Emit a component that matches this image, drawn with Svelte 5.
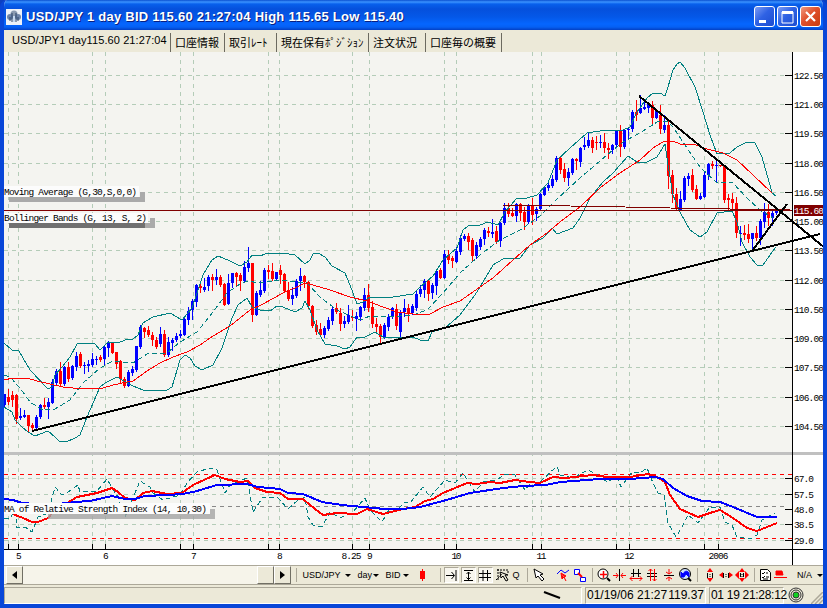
<script lang="ts">
  // one row per day: colour, high, body top, body bottom, low (chart pixels)
  const rows = `b 394 394 405 406|r 389 397 402 404|r 391 395 400 406|r 394 395 419 423|b 408 416 418 419|b 410 415 417 417|r 415 415 426 432|r 423 425 428 430|b 415 417 428 428|b 404 405 417 418|r 398 405 407 408|b 398 402 407 418|b 379 382 403 403|b 369 371 383 384|r 362 371 384 385|b 366 367 384 385|r 362 367 379 381|b 365 366 378 379|b 352 356 367 370|r 352 354 366 367
b 362 365 366 373|b 360 364 366 371|b 353 359 365 366|b 356 359 360 364|r 355 357 360 361|b 346 347 359 364|b 341 343 348 356|r 343 343 353 353|r 352 352 364 368|r 360 361 379 383|r 377 379 386 387|b 370 372 386 386|b 366 369 373 375|b 346 346 370 371|b 325 327 347 348|r 327 328 332 337|r 326 330 335 336|r 332 335 340 345|r 337 340 347 348|b 327 334 344 346
r 330 334 355 356|b 337 342 355 356|b 338 340 343 350|b 333 336 340 341|b 330 334 336 337|b 317 319 335 335|b 307 311 320 324|b 299 301 310 319|b 284 285 302 306|r 284 286 288 292|b 278 287 290 291|b 275 277 286 290|r 274 277 280 290|b 269 277 280 284|r 275 277 285 286|r 283 284 305 305|b 274 283 304 304|b 273 273 283 287|r 272 273 277 286|r 273 275 281 290
b 261 267 281 282|b 247 263 268 271|r 263 263 315 321|b 291 293 315 315|b 281 290 295 296|b 268 270 291 292|r 265 270 272 278|r 263 271 279 280|b 272 272 279 279|r 265 270 275 283|r 273 274 291 292|r 282 290 299 300|b 287 295 299 304|b 279 281 296 297|b 268 276 281 290|r 275 276 282 287|r 281 282 306 308|r 305 306 326 327|r 320 325 332 334|r 323 329 335 336
b 326 328 335 337|b 317 320 329 330|b 307 309 321 324|r 303 308 312 313|r 308 313 324 330|b 316 321 324 327|b 305 315 322 323|r 310 317 318 320|b 312 316 319 330|b 306 307 317 320|b 288 295 308 310|r 284 295 308 311|r 301 307 324 327|r 318 324 327 333|r 324 326 337 344|b 323 325 337 338|b 314 317 327 330|b 307 308 317 318|r 304 309 326 329|b 310 312 332 337
b 299 308 312 316|r 304 308 313 321|b 304 306 313 314|b 291 294 308 310|b 285 289 294 296|b 279 281 290 297|r 280 281 294 300|b 283 285 293 298|b 270 271 286 294|r 268 270 278 278|b 250 254 278 278|r 250 255 260 263|r 256 258 261 267|b 247 251 262 262|b 235 238 252 254|b 234 236 239 240|r 233 236 242 249|r 238 240 256 260|b 242 245 256 258|b 237 239 247 249
b 228 230 239 244|r 227 231 233 236|b 219 232 234 237|r 226 231 242 243|b 222 223 241 246|b 203 208 223 224|r 203 208 214 216|r 208 213 216 216|b 203 204 216 221|r 203 204 213 220|r 207 212 222 229|b 204 206 222 223|r 198 205 215 224|b 207 209 214 220|b 193 194 209 210|b 186 187 195 195|b 183 185 188 190|b 175 179 186 187|b 156 158 180 181|r 156 158 170 173
r 163 169 178 181|b 168 172 178 185|b 158 159 173 174|r 158 159 161 169|b 147 148 162 166|b 137 145 147 149|b 133 140 146 147|r 137 140 148 152|r 136 142 143 149|b 135 142 143 147|r 133 142 148 152|r 143 148 150 158|b 144 145 150 153|b 130 131 145 146|r 125 131 147 156|b 129 130 147 148|b 127 129 130 139|b 110 112 129 131|r 100 112 115 120|b 95 108 113 113
b 102 107 109 109|b 103 104 108 112|r 101 105 118 123|b 109 111 118 118|r 105 115 129 133|b 115 125 130 132|r 120 125 176 188|r 170 175 194 202|r 188 194 208 210|b 191 199 210 210|b 176 178 200 201|b 173 176 179 185|r 169 175 190 191|r 185 189 199 199|b 193 196 199 199|b 172 175 197 197|b 163 164 175 179|r 161 164 166 168|b 159 165 166 182|r 165 165 166 166
r 165 166 200 202|r 194 198 200 210|r 193 199 203 208|r 197 203 233 237|b 226 233 234 245|r 225 233 235 239|r 224 234 239 242|b 233 233 239 250|r 226 233 238 240|b 219 221 238 244|b 203 212 222 227|r 204 212 218 225|b 211 213 218 225|b 210 211 213 214`;

  const candles = rows.split(/[|\n]/).map((row, i) => {
    const [color, ...values] = row.trim().split(' ');
    const [high, top, bottom, low] = values.map(Number);
    return { x: 4 + i * 4, up: color === 'b', high, top, bottom, low };
  });

  const movingAverage =
    '4,380 13,378 27,378 37,381 50,384 63,387 83,389 103,388 113,385 127,382 133,381 147,371 160,363 173,357 187,352 200,345 213,336 230,326 250,310 263,304 283,293 297,287 305,283 313,285 330,290 350,297 367,301 383,307 397,312 413,314 430,314 443,307 460,301 480,287 493,278 513,260 530,245 547,233 560,222 580,207 600,188 620,173 640,160 653,148 663,142 673,141 680,144 693,144 707,149 723,153 737,160 753,175 772,193';
  const upperBand =
    '4,343 12,350 19,351 30,370 48,389 52,387 55,375 62,367 70,357 77,344 83,343 95,344 100,350 108,342 118,343 125,340 133,339 138,335 143,323 153,317 170,313 182,320 192,308 203,275 212,260 218,256 230,261 240,266 247,262 252,255 260,256 265,254 283,253 295,255 305,264 310,260 313,254 318,253 325,257 332,266 345,273 352,290 357,304 363,302 370,297 380,298 393,297 413,294 420,287 433,276 443,260 457,248 463,230 468,226 480,225 488,222 498,225 505,212 517,198 527,198 537,195 548,183 557,160 570,148 587,133 600,131 623,130 630,127 637,112 647,98 653,93 660,93 665,96 668,87 673,70 677,64 680,62 685,68 695,87 703,112 710,135 717,154 730,153 737,147 747,142 755,143 762,157 770,185 772,193 776,196';
  const lowerBand =
    '4,407 12,412 15,420 22,427 28,432 35,436 48,431 55,437 59,441 66,442 75,438 80,435 87,417 100,387 105,383 117,377 122,380 133,386 143,390 167,390 172,387 180,360 185,355 190,358 195,366 202,370 213,365 222,348 232,318 238,305 247,298 252,307 260,310 270,311 277,306 283,307 295,312 302,308 305,301 310,310 317,330 325,344 337,346 345,349 350,347 357,337 365,337 375,332 383,337 413,337 420,340 428,341 432,332 445,328 460,315 475,295 483,282 493,265 503,259 520,258 530,245 543,238 552,228 557,234 573,228 580,218 590,198 603,182 613,173 628,156 637,162 647,162 657,157 665,144 668,165 673,195 680,212 690,230 700,237 707,232 717,213 732,211 737,222 742,242 750,257 757,265 763,265 770,255 776,247';
  const middleBand =
    '4,375 10,377 20,388 30,402 43,410 55,409 70,400 83,383 100,368 113,361 123,362 133,363 147,354 160,353 167,353 180,342 197,332 213,312 227,293 240,284 247,281 260,283 280,280 307,283 320,297 337,310 360,320 370,316 387,317 413,315 427,310 443,293 460,273 480,255 500,240 520,230 540,216 557,199 580,178 607,155 623,142 640,133 657,122 667,121 673,127 687,148 700,167 717,183 732,182 747,198 760,210 773,218';

  const rsi =
    '4,518 10,518 15,510 17,528 25,527 32,532 38,517 48,513 55,487 62,495 68,492 78,485 80,492 97,491 107,479 115,493 118,497 125,517 132,500 140,481 150,487 153,493 163,500 180,495 187,483 197,472 210,468 217,470 225,493 230,485 247,478 253,512 263,497 277,497 288,509 298,500 305,497 308,517 313,525 322,527 330,512 340,518 353,512 365,498 370,510 382,522 390,508 397,510 405,502 410,503 423,487 430,497 445,480 455,483 463,473 475,492 483,482 497,480 505,474 515,475 525,490 532,482 540,482 557,466 560,475 573,478 588,470 598,475 607,482 617,477 621,487 632,472 640,473 647,468 653,483 658,493 664,495 668,523 676,537 682,527 688,515 698,523 710,507 720,507 725,522 732,525 737,537 750,539 757,535 762,520 775,513';
  const rsiFast =
    '4,505 15,515 23,518 32,522 38,522 48,518 55,510 67,503 77,497 97,493 112,488 118,492 125,498 135,500 143,493 152,491 167,494 182,493 193,485 215,475 225,479 240,482 248,481 255,488 267,492 280,493 288,499 303,499 310,505 323,515 337,513 357,514 367,509 383,514 403,509 415,507 425,501 433,499 443,493 455,488 467,483 477,484 490,482 500,483 515,480 530,482 540,483 553,477 565,478 593,475 607,477 630,477 648,474 657,477 665,482 670,495 680,509 698,517 710,513 720,510 733,518 747,528 757,531 767,527 777,523';
  const rsiSlow =
    '4,499 13,500 22,503 50,505 75,502 90,501 112,496 125,499 135,499 145,496 167,495 183,494 197,491 217,485 247,484 258,487 280,489 288,493 303,494 322,502 342,505 363,507 385,509 403,509 420,507 443,501 470,493 503,488 523,486 546,485 560,482 600,479 630,479 655,477 663,479 673,488 687,496 702,501 720,502 733,507 757,517 777,517';

  const columns = [8, 18, 92, 105, 180, 193, 268, 279, 352, 369, 444, 456, 532, 541, 616, 629, 704, 718];
  const prices = [
    [75, '122.50'], [104, '121.00'], [133, '119.50'], [163, '118.00'], [192, '116.50'], [221, '115.00'], [250, '113.50'],
    [280, '112.00'], [309, '110.50'], [338, '109.00'], [367, '107.50'], [397, '106.00'], [426, '104.50'],
  ] as [number, string][];
  const levels = [[478, '67.0'], [494, '57.5'], [509, '48.0'], [524, '38.5'], [540, '29.0']] as [number, string][];
  const months = [
    [18, '5'], [105, '6'], [193, '7'], [279, '8'], [351, '8.25'], [369, '9'], [456, '10'], [541, '11'], [629, '12'], [718, '2006'],
  ] as [number, string][];

  const tabs = [
    { label: '口座情報', width: 54 },
    { label: '取引ﾚｰﾄ', width: 52 },
    { label: '現在保有ﾎﾟｼﾞｼｮﾝ', width: 92 },
    { label: '注文状況', width: 57 },
    { label: '口座毎の概要', width: 76 },
  ];
</script>

<div class="window">
  <header class="titlebar">
    <svg class="app-icon" width="16" height="16" viewBox="0 0 16 16">
      <rect width="16" height="16" fill="#eef2f8" />
      <circle cx="8" cy="5" r="3.5" fill="#8a9ab0" />
      <circle cx="4" cy="8" r="3" fill="#6d84a8" />
      <circle cx="12" cy="8" r="3" fill="#6d84a8" />
      <path d="M6 4v9M10 4v9M4 8v4M12 8v4" stroke="#2c4468" />
      <path d="M7 7h2v6H7z" fill="#c4d8f0" />
    </svg>
    <h1>USD/JPY 1 day BID 115.60 21:27:04 High 115.65 Low 115.40</h1>
    <div class="controls">
      <button aria-label="Minimize"><svg width="19" height="19"><path d="M4 13h7v3H4z" fill="#fff" /></svg></button>
      <button aria-label="Maximize"><svg width="19" height="19"><path d="M4 5h11v11H4z" fill="none" stroke="#fff" /><path d="M4 4h11v3H4z" fill="#fff" /></svg></button>
      <button class="close" aria-label="Close"><svg width="19" height="19"><path d="M5 5l9 9M14 5l-9 9" stroke="#fff" stroke-width="2.2" /></svg></button>
    </div>
  </header>

  <nav class="tabs">
    <span class="tab current">USD/JPY1 day115.60 21:27:04</span>
    {#each tabs as tab}
      <span class="tab" style:width="{tab.width}px">{tab.label}</span>
    {/each}
  </nav>

  <svg class="chart" width="819" height="513" viewBox="4 52 819 513">
    <rect x="4" y="52" width="819" height="513" fill="#fff" />
    <rect x="4" y="52" width="788" height="497" fill="#f4f4f0" />

    <g class="grid">
      {#each columns as x}
        <line x1={x + 0.5} x2={x + 0.5} y1="52" y2="549" />
      {/each}
      {#each prices as [y]}
        <line x1="4" x2="792" y1={y + 0.5} y2={y + 0.5} />
      {/each}
      {#each levels.filter(([y]) => y !== 509) as [y]}
        <line x1="4" x2="792" y1={y + 0.5} y2={y + 0.5} />
      {/each}
      <line class="mid" x1="4" x2="785" y1="506.5" y2="506.5" />
      <line class="limit" x1="4" x2="792" y1="474.5" y2="474.5" />
      <line class="limit" x1="4" x2="792" y1="538.5" y2="538.5" />
    </g>
    <rect x="4" y="452" width="819" height="3" fill="#c0c0c0" />

    <g class="candles">
      {#each candles as c}
        <g fill={c.up ? '#0000ff' : '#ff0000'}>
          <rect x={c.x} y={c.high} width="1" height={c.low - c.high + 1} />
          <rect x={c.x - 1} y={c.top} width="3" height={Math.max(1, c.bottom - c.top)} />
        </g>
      {/each}
    </g>

    <g class="lines">
      <polyline points={upperBand} stroke="#008080" />
      <polyline points={lowerBand} stroke="#008080" />
      <polyline points={middleBand} stroke="#008080" stroke-dasharray="5 3" />
      <polyline points={movingAverage} stroke="#ff0000" />
      <path d="M4 210.5H792" stroke="#800000" />
      <path d="M503 205.5H537L603 206.5H603L670 208L790 210" stroke="#800000" />
      <path d="M32 431L820 234M639 96L825 248M752 251L787 204" stroke="#000" stroke-width="2" />
      <polyline points={rsi} stroke="#008080" stroke-dasharray="5 3" />
      <polyline points={rsiFast} stroke="#ff0000" stroke-width="2" />
      <polyline points={rsiSlow} stroke="#0000ff" stroke-width="2" />
    </g>

    <!-- indicator captions -->
    <g class="text">
      <rect x="4" y="186" width="135" height="11" fill="#fcfcfc" />
      <path d="M9 197h131v-5h5v10H9z" fill="#aaa" />
      <text x="4" y="195" textLength="133">Moving Average (G,30,S,0,0)</text>
      <rect x="4" y="213" width="144" height="10" fill="#fcfcfc" />
      <path d="M9 223h136v5H9z" fill="#707070" />
      <path d="M150 218h5v10h-10v-5h5z" fill="#aaa" />
      <text x="4" y="221" textLength="143">Bollinger Bands (G, 13, S, 2)</text>
      <rect x="4" y="503" width="206" height="11" fill="#fcfcfc" />
      <path d="M48 514h162v-5h5v10H48z" fill="#a4a4a4" fill-opacity="0.8" />
      <text x="4" y="512" textLength="203">MA of Relative Strength Index (14, 10,30)</text>
    </g>

    <g class="axis">
      <path d="M792.5 52V565M4 549.5H823" />
      {#each columns as x}
        <path d="M{x + 0.5} 544V549" />
      {/each}
      {#each [...prices, ...levels] as [y]}
        <path d="M785 {y + 0.5}H792" />
      {/each}
    </g>

    <g class="text">
      {#each [...prices, ...levels] as [y, label]}
        <text x="794" y={y + 4} textLength={label.length * 5}>{label}</text>
      {/each}
      {#each months as [x, label]}
        <text x={x - label.length * 2.5 + 0.5} y="559" textLength={label.length * 5}>{label}</text>
      {/each}
      <rect x="794" y="205" width="29" height="11" fill="#800000" />
      <text x="794" y="214" textLength="30" fill="#fff">115.60</text>
    </g>
  </svg>

  <div class="toolbar">
    <div class="scrollbar">
      <span class="key"><svg width="5" height="8"><path d="M5 0v8L0 4z" /></svg></span>
      <span class="track"></span>
      <span class="key"></span>
      <span class="key"><svg width="5" height="8"><path d="M0 0v8l5-4z" /></svg></span>
    </div>
    <i class="sep"></i>
    <span class="pick pair">USD/JPY</span>
    <span class="pick day">day</span>
    <span class="pick bid">BID</span>
    <svg class="pick kind" width="9" height="14"><path d="M2 3h5v8H2zM4 1h1v12H4z" fill="#f00" /></svg>
    <i class="sep"></i>
    <div class="group modes">
      <span class="pressed"><svg width="12" height="14" viewBox="0 0 12 14"><path d="M1 7.5h8M6.500 4l3 3.500-3 3.500M11 2v11" /></svg></span>
      <span class="pressed"><svg width="12" height="14" viewBox="0 0 12 14"><path d="M2 2.500h9M2 12.500h9M6.500 4v8M4.500 6l2-2 2 2M4.500 9.500l2 2 2-2" /></svg></span>
      <span class="pressed"><svg width="12" height="14" viewBox="0 0 12 14"><path d="M4 2v11M8.500 2v11M0 5.500h12M0 9.500h12" /></svg></span>
      <span><svg width="13" height="14" viewBox="0 0 13 14"><path d="M1 2h11M2 1v12M0 12l6-6M12 3v3" stroke-dasharray="2 1" /><path d="M4 4l1 6 2-2 3 5 2-1-3-5h3z" /></svg></span>
      <span class="q">Q</span>
    </div>
    <i class="sep"></i>
    <div class="group draw">
      <svg class="pick cursor" width="12" height="14" viewBox="0 0 12 14"><path d="M1 1l2 9 2-2 4 5 2-2-4-4 3-1z" fill="#fff" /></svg>
      <svg width="14" height="14" viewBox="0 0 14 14"><path d="M1 6l4-4 4 3 4-3" stroke="#00f" /><path d="M5 5l1 6 2-2 2 4M5 5l5 3-2 1" stroke="#f00" fill="#f00" /></svg>
      <svg width="14" height="14" viewBox="0 0 14 14"><path d="M1.500 1.500h5v5h-5zM7.500 9.500h5v4h-5z" stroke="#00f" fill="#fff" /><path d="M5 5l4 4" stroke="#f00" stroke-width="2" /></svg>
    </div>
    <i class="sep"></i>
    <div class="group zoom">
      <svg width="14" height="14" viewBox="0 0 14 14"><circle cx="6" cy="6" r="5" fill="#fff" /><path d="M10 10l3 3" stroke-width="2" /><path d="M3 6.500h7M6.500 3v7" stroke="#f00" stroke-width="1.500" /></svg>
      <svg width="14" height="14" viewBox="0 0 14 14"><path d="M6.500 1v12" /><path d="M0 7.500h5M8 7.500h5M3 5l2 2.500L3 10M10 5L8 7.500l2 2.500" stroke="#f00" /></svg>
      <svg width="14" height="14" viewBox="0 0 14 14"><path d="M2 5.500h10M4.500 1v8M9.500 1v8" /><path d="M1 10.500h12M3.500 8L1 10.500 3.500 13M10.500 8l2.500 2.500-2.500 2.500" stroke="#f00" /></svg>
      <svg width="14" height="14" viewBox="0 0 14 14"><path d="M2 5.500h10M2 8.500h10" /><path d="M5.500 1v12M9.500 1v12M3.500 3l2-2 2 2M7.500 11l2 2 2-2" stroke="#f00" /></svg>
      <svg width="14" height="14" viewBox="0 0 14 14"><path d="M2 7.500h10" /><path d="M7 1v5M7 9v4M4 4l3 2 3-2M4 11l3-2 3 2" stroke="#f00" /></svg>
      <svg width="14" height="14" viewBox="0 0 14 14"><circle cx="7" cy="6" r="5.500" fill="#cfe2ff" /><path d="M10 10l3 3" stroke-width="2" /><path d="M3 9V4l2 2c2-4 5-3 6-1v4L8 6 6 9z" fill="#00f" stroke="#00f" /></svg>
    </div>
    <i class="sep"></i>
    <div class="group ratio">
      <svg width="14" height="14" viewBox="0 0 14 14"><path d="M7 0l3 4H4zM7 14l3-4H4z" fill="#f00" stroke="none" /><path d="M4.500 5v5M9.500 5v5M7 6v1M7 8v1" /></svg>
      <svg width="14" height="14" viewBox="0 0 14 14"><path d="M0 7l4-3v6zM14 7l-4-3v6z" fill="#f00" stroke="none" /><path d="M4.500 5v5M9.500 5v5M7 6v1M7 8v1" /></svg>
      <svg width="14" height="14" viewBox="0 0 14 14"><path d="M7 0l3 4H4zM7 14l3-4H4zM0 7l4-4v8zM14 7l-4-4v8z" fill="#f00" stroke="none" /><path d="M5.500 5v4M8.500 5v4M7 6v1M7 8v1" /></svg>
    </div>
    <i class="sep"></i>
    <div class="group list">
      <svg width="11" height="14" viewBox="0 0 11 14"><path d="M.5 1.500h7l3 3v8H.5z" fill="#fff" /><path d="M2 5l1 1 2-2M6 5h2M2 9l1 1 2-2M6 9h3M3 11h5" /></svg>
      <svg class="pick" width="13" height="14" viewBox="0 0 13 14"><path d="M2 3h6l1 4H2zM0 9.500h13" fill="#f00" stroke="#f00" /></svg>
      <span class="pick na">N/A</span>
    </div>
  </div>

  <footer class="status">
    <span class="cell message"><svg width="18" height="10"><path d="M1 2l16 6" stroke="#000" stroke-width="2" /></svg></span>
    <span class="cell quote"><b>01/19/06 21:27</b><b>119.37</b></span>
    <span class="cell clock"><b>01 19 21:28:12</b></span>
    <svg class="lamp" width="16" height="16" viewBox="0 0 16 16">
      <circle cx="8" cy="8" r="7" /><circle cx="8" cy="8" r="5" /><circle cx="8" cy="8" r="3" fill="#10d020" />
    </svg>
    <svg class="grip" width="12" height="12"><path d="M0 12L12 0M4 12l8-8M8 12l4-4" stroke="#aca899" stroke-width="1.500" /></svg>
  </footer>
</div>

<style>
  :global(body) {
    background: #0c3fc0;
  }

  .window {
    width: 827px;
    height: 608px;
    box-sizing: border-box;
    display: flex;
    flex-direction: column;
    border: 4px solid #0846d8;
    border-top: 0;
    border-radius: 7px 7px 0 0;
    background: #ece9d8;
    font-family: 'Liberation Sans', 'Noto Sans CJK JP', sans-serif;
    color: #000;
    overflow: hidden;
  }

  .titlebar {
    height: 30px;
    flex: none;
    margin: 0 -4px;
    padding: 3px 6px 0;
    box-sizing: border-box;
    display: flex;
    align-items: center;
    background: linear-gradient(#0a50d0 0, #3b93ff 2px, #0860ec 4px, #0550dc 9px, #0458e8 17px, #0566ff 24px, #0560f4 27px, #0340c4 30px);
  }

  h1 {
    margin: 0 0 0 4px;
    flex: 1;
    font-size: 13px;
    line-height: 16px;
    letter-spacing: 0.25px;
    white-space: nowrap;
    color: #fff;
    text-shadow: 1px 1px #0a1f80;
  }

  .controls {
    display: flex;
    gap: 2px;
  }

  .controls button {
    width: 21px;
    height: 21px;
    padding: 0;
    border: 1px solid #fff;
    border-radius: 3px;
    background: linear-gradient(135deg, #7c9cf4, #2f62e4 45%, #1c4cd0);
  }

  .controls .close {
    background: linear-gradient(135deg, #f09a80, #e0502c 45%, #c83c10);
  }

  .controls svg {
    display: block;
  }

  .tabs {
    height: 22px;
    flex: none;
    display: flex;
    align-items: flex-end;
    font-size: 11px;
    line-height: 18px;
    white-space: nowrap;
  }

  .tab {
    height: 19px;
    box-sizing: border-box;
    flex: none;
    padding-left: 4px;
    border-right: 1px solid #6c6a60;
    font-family: 'Noto Sans CJK JP', sans-serif;
    font-size: 11px;
  }

  .current {
    width: 167px;
    padding-left: 8px;
    line-height: 14px;
    letter-spacing: 0.1px;
    font-family: 'Liberation Sans', sans-serif;
  }

  .chart {
    display: block;
    flex: none;
    shape-rendering: crispEdges;
  }

  .grid line {
    stroke: #b4ccb8;
    stroke-dasharray: 4 4;
  }

  .grid .mid {
    stroke: #888;
  }

  .grid .limit {
    stroke: #f00;
  }

  .lines {
    fill: none;
  }

  .axis {
    stroke: #000;
    fill: none;
  }

  .text {
    font-family: 'Liberation Mono', monospace;
    font-size: 9.500px;
  }

  .toolbar {
    height: 20px;
    flex: none;
    display: flex;
    align-items: center;
    box-sizing: border-box;
    border-top: 1px solid #aca899;
    border-bottom: 1px solid #aca899;
    font-size: 9px;
  }

  .toolbar svg {
    flex: none;
    fill: none;
    stroke: #000;
  }

  .scrollbar {
    width: 293px;
    height: 18px;
    display: flex;
    padding-left: 2px;
    box-sizing: border-box;
    background: #f6f4ea;
  }

  .key {
    width: 17px;
    box-sizing: border-box;
    display: flex;
    align-items: center;
    justify-content: center;
    border: 1px solid #fff;
    border-right-color: #716f64;
    border-bottom-color: #716f64;
    background: #ece9d8;
  }

  .key svg {
    fill: #000;
    stroke: none;
  }

  .track {
    flex: 1;
  }

  .sep {
    width: 1px;
    height: 14px;
    flex: none;
    margin-left: 5px;
    background: #aca899;
  }

  .pick {
    position: relative;
  }

  span.pick::after,
  .cursor + svg {
    flex: none;
  }

  span.pick {
    display: flex;
    align-items: center;
    justify-content: space-between;
    flex: none;
  }

  span.pick::after {
    content: '';
    border: 3px solid transparent;
    border-top: 3px solid #000;
    border-bottom: 0;
  }

  .pair {
    width: 48px;
    margin-left: 6px;
  }

  .day {
    width: 21px;
    margin-left: 7px;
  }

  .bid {
    width: 23px;
    margin-left: 7px;
  }

  .kind {
    margin: 0 8px 0 9px;
  }

  .toolbar .kind {
    stroke: none;
  }

  .group {
    display: flex;
    align-items: center;
    flex: none;
  }

  .modes {
    gap: 2px;
    margin-left: 3px;
    width: 78px;
  }

  .modes span {
    width: 15px;
    height: 16px;
    box-sizing: border-box;
    display: flex;
    align-items: center;
    justify-content: center;
    flex: none;
  }

  .modes .pressed {
    border: 1px solid #aca899;
    border-right-color: #fff;
    border-bottom-color: #fff;
    background: #f8f6ee;
  }

  .modes .q {
    width: 9px;
    font-size: 9px;
  }

  .draw {
    gap: 3px;
    margin-left: 5px;
  }

  .cursor {
    margin-right: 8px;
  }

  .zoom {
    gap: 2.300px;
    margin-left: 4px;
  }

  .ratio {
    gap: 2px;
    margin-left: 5px;
  }

  .list {
    gap: 3px;
    margin-left: 5px;
  }

  .na {
    width: 26px;
    margin-left: 7px;
  }

  .status {
    flex: 1;
    display: flex;
    align-items: center;
    padding-top: 1px;
    gap: 3px;
    font-size: 12px;
  }

  .cell {
    height: 17px;
    box-sizing: border-box;
    display: flex;
    align-items: center;
    justify-content: space-between;
    border: 1px solid #aca899;
    border-right-color: #fff;
    border-bottom-color: #fff;
    white-space: nowrap;
  }

  .cell b {
    font-weight: normal;
  }

  .message {
    width: 578px;
    justify-content: flex-end;
    padding-right: 20px;
  }

  .quote {
    width: 121px;
    padding: 0 1px;
  }

  .clock {
    width: 75px;
    padding-left: 1px;
    letter-spacing: -0.3px;
  }

  .lamp {
    margin-left: 1px;
    fill: none;
    stroke: #333;
  }

  .grip {
    margin: 5px 0 0 auto;
  }
</style>
